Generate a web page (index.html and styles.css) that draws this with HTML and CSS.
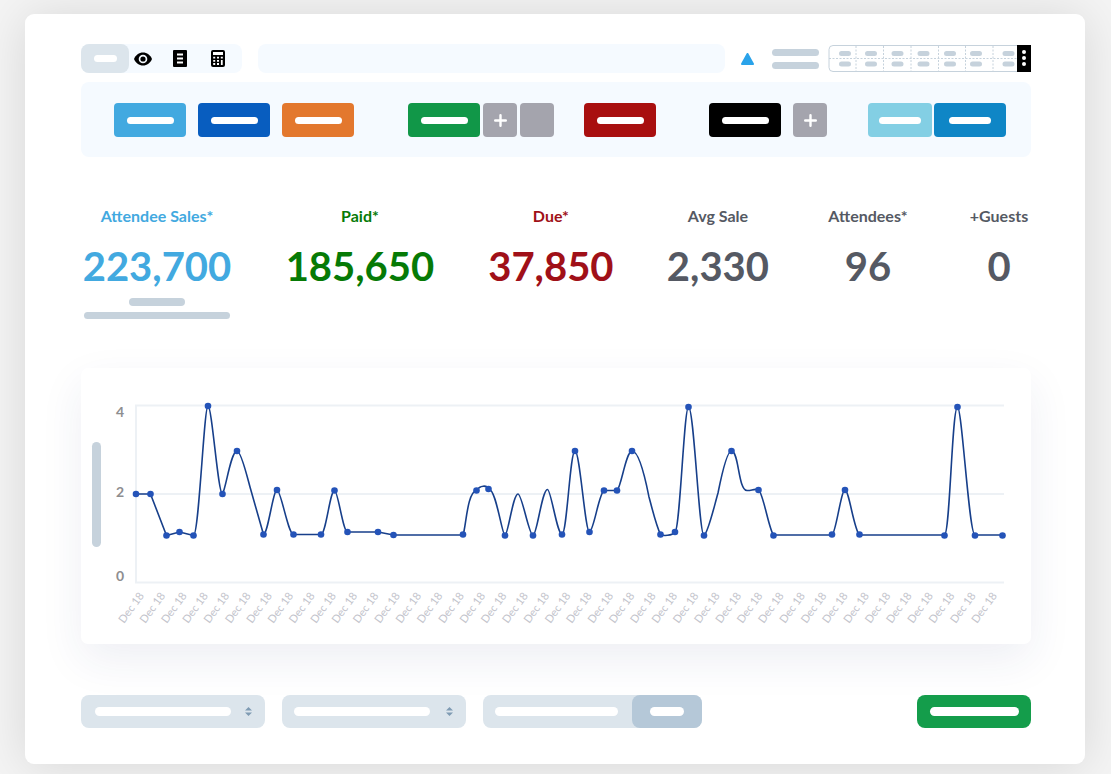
FILE: index.html
```html
<!DOCTYPE html>
<html lang="en">
<head>
<meta charset="utf-8">
<meta name="viewport" content="width=device-width, initial-scale=1">
<title>Attendee Sales</title>
<link rel="stylesheet" href="styles.css">
</head>
<body>
<main class="window">
  <header class="topbar">
    <nav class="tabs" aria-label="Views">
      <button class="tab tab-current" type="button" aria-label="Overview"><span class="pill pill-tab"></span></button>
      <button class="tab tab-eye" type="button" aria-label="Preview">
        <svg width="18" height="14" viewBox="0 0 18 14"><path d="M9 0.5C5 0.5 1.7 3 0 7c1.700 4 5 6.500 9 6.500S16.300 11 18 7C16.300 3 13 0.500 9 0.500z"/><circle cx="9" cy="7" r="4.300" fill="#f5faff"/><circle cx="9" cy="7" r="2.600"/></svg>
      </button>
      <button class="tab tab-list" type="button" aria-label="List">
        <svg width="14" height="17" viewBox="0 0 14 17"><rect width="14" height="17" rx="1"/><path d="M4 4.500h6M4 8.500h6M4 12.500h6" stroke="#fff" stroke-width="1.800"/></svg>
      </button>
      <button class="tab tab-calc" type="button" aria-label="Calculator">
        <svg width="14" height="17" viewBox="0 0 14 17"><rect width="14" height="17" rx="2"/><path d="M2 2h10v3H2z" fill="#fff"/><path d="M2.200 7.700h2M6 7.700h2M9.800 7.700h2M2.200 10.800h2M6 10.800h2M2.200 14h2M6 14h2" stroke="#fff" stroke-width="1.800"/><path d="M10.800 10v5" stroke="#fff" stroke-width="1.800"/></svg>
      </button>
    </nav>
    <input class="search" type="search" aria-label="Search">
    <svg class="triangle" width="13" height="12" viewBox="0 0 13 12"><path d="M6.500 1 12 11H1z" fill="#2aa3ea" stroke="#2aa3ea" stroke-width="2" stroke-linejoin="round"/></svg>
    <div class="lines"><span class="bar bar-line"></span><span class="bar bar-line"></span></div>
    <div class="mini">
      <svg width="189" height="28" viewBox="0 0 189 28">
        <path d="M189 0.500H5a4 4 0 0 0-4 4v18a4 4 0 0 0 4 4h184" fill="none" stroke="#c6d2dc"/>
        <path d="M1 13.500h188M28 1v26M55.500 1v26M83 1v26M110.500 1v26M137.500 1v26M165 1v26" fill="none" stroke="#c6d2dc" stroke-dasharray="2 1.500"/>
        <path d="M13.500 8.500h7M39.500 8.500h7M66 8.500h7M92 8.500h7M118.500 8.500h7M144.500 8.500h7M177 8.500h7M13.500 19h7M39.500 19h7M66 19h7M92 19h7M118.500 19h7M144.500 19h7M177 19h7" fill="none" stroke="#c6d2dc" stroke-width="5" stroke-linecap="round"/>
      </svg>
      <button class="more" type="button" aria-label="More"><svg width="4" height="18" viewBox="0 0 4 18" fill="#fff"><circle cx="2" cy="3" r="2"/><circle cx="2" cy="9" r="2"/><circle cx="2" cy="15" r="2"/></svg></button>
    </div>
  </header>

  <section class="actions" aria-label="Actions">
    <div class="group group-wide">
      <button class="btn sky" type="button" aria-label="Action one"><span class="pill"></span></button>
      <button class="btn blue" type="button" aria-label="Action two"><span class="pill"></span></button>
      <button class="btn orange" type="button" aria-label="Action three"><span class="pill"></span></button>
    </div>
    <div class="group">
      <button class="btn green" type="button" aria-label="Action four"><span class="pill"></span></button>
      <button class="btn square" type="button" aria-label="Add"><svg width="13" height="13" viewBox="0 0 13 13"><path d="M6.500 1.200v10.600M1.200 6.500h10.600" stroke="#fff" stroke-width="2.400" stroke-linecap="round"/></svg></button>
      <button class="btn square" type="button" aria-label="Options"></button>
    </div>
    <div class="group">
      <button class="btn red" type="button" aria-label="Action five"><span class="pill"></span></button>
    </div>
    <div class="group group-wide">
      <button class="btn black" type="button" aria-label="Action six"><span class="pill"></span></button>
      <button class="btn square" type="button" aria-label="Add"><svg width="13" height="13" viewBox="0 0 13 13"><path d="M6.500 1.200v10.600M1.200 6.500h10.600" stroke="#fff" stroke-width="2.400" stroke-linecap="round"/></svg></button>
    </div>
    <div class="group group-tight">
      <button class="btn narrow aqua" type="button" aria-label="Action seven"><span class="pill pill-short"></span></button>
      <button class="btn azure" type="button" aria-label="Action eight"><span class="pill pill-short"></span></button>
    </div>
  </section>

  <section class="stats" aria-label="Totals">
    <div class="stat stat-sales">
      <h2 class="label">Attendee Sales*</h2>
      <p class="value">223,700</p>
      <span class="bar bar-small"></span>
      <span class="bar bar-wide"></span>
    </div>
    <div class="stat stat-paid"><h2 class="label">Paid*</h2><p class="value">185,650</p></div>
    <div class="stat stat-due"><h2 class="label">Due*</h2><p class="value">37,850</p></div>
    <div class="stat"><h2 class="label">Avg Sale</h2><p class="value">2,330</p></div>
    <div class="stat"><h2 class="label">Attendees*</h2><p class="value">96</p></div>
    <div class="stat"><h2 class="label">+Guests</h2><p class="value">0</p></div>
  </section>

  <section class="chart" aria-label="Sales by day">
    <svg class="plot" viewBox="81 368 950 276">
      <rect x="92" y="442" width="9" height="105" rx="4.500" fill="#c6d2dc"/>
      <path d="M1004 405.500H136V582.500H1004M136 494H1004" fill="none" stroke="#edf1f5" stroke-width="2"/>
      <g class="ticks"><text x="120" y="417">4</text><text x="120" y="497">2</text><text x="120" y="581">0</text></g>
      <path class="curve" d="M136 494H150.500L166.500 535.500L179.500 532L193.500 535.500C199 535 204 406 208 406C212 406 218 494 222.500 494C226 488 231 451 237 451C241 451 247 476 250 487L263.500 534.500C268 534 273 490 277 490C281 490 288 534 293.500 534.500H321C326 534 330 490.500 334.500 490.500C338 490.500 343 532 347.500 532H378L393.500 535H463C466 528 467 492 476.500 490.500C480 485 487 485 488.500 489C496 488 502 535.500 505 535.500C508 535 513 494 518 494C522 494 529 535.500 533 535.500C537 535 542 489.500 547.500 489.500C551 489.500 557 534 562 534.500C567 534 570 451 575 451C580 451 585 532 589.500 532C594 530 599 493 604 490.500L617 490.500C621 488 626 451 632 451C640 451 647 487 649 497C652 508 656 525 660.500 534.500C663 536 672 536 675 532C680 530 684 407 688.500 407C694 407 699 535.500 704 535.500C708 533 714 507 718 493C722 473 727 451 731.500 451C739 451 738 490 747 490.500C751 491 755 488 758.500 490C763 492 769 530 773.500 535H832C836 533 841 490 845 490C849 490 854 530 859.500 535H944.500C950 534 952 407 957.500 407C962 407 969 535 975 535H1002.500"/>
      <g id="dots" class="dots"></g>
      <g id="dates" class="dates"></g>
    </svg>
  </section>

  <footer class="controls">
    <label class="field">
      <select class="select" aria-label="First filter"><option></option></select>
      <span class="face"><span class="pill pill-field"></span><svg width="7" height="9" viewBox="0 0 7 9" fill="#7f9bb3"><path d="M3.500 0 7 3.500H0zM0 5.500h7L3.500 9z"/></svg></span>
    </label>
    <label class="field">
      <select class="select" aria-label="Second filter"><option></option></select>
      <span class="face face-near"><span class="pill pill-field"></span><svg width="7" height="9" viewBox="0 0 7 9" fill="#7f9bb3"><path d="M3.500 0 7 3.500H0zM0 5.500h7L3.500 9z"/></svg></span>
    </label>
    <div class="combo">
      <input class="entry" type="text" aria-label="Value">
      <button class="apply" type="button" aria-label="Apply"><span class="pill pill-apply"></span></button>
    </div>
    <button class="submit" type="button" aria-label="Submit"><span class="pill pill-submit"></span></button>
  </footer>
</main>
<script src="chart.js"></script>
</body>
</html>
```

FILE: styles.css
```css
* {
  box-sizing: border-box;
}

body {
  margin: 0;
  padding: 14px 26px 10px 25px;
  background: #f4f4f4;
  font-family: Lato, "Liberation Sans", sans-serif;
  color: #555963;
}

button,
input,
select {
  border: 0;
  padding: 0;
  margin: 0;
  font: inherit;
  appearance: none;
}

button {
  display: flex;
  align-items: center;
  justify-content: center;
  cursor: pointer;
}

.window {
  padding: 30px 54px 36px 56px;
  border-radius: 9px;
  background: #fff;
  box-shadow: 0 2px 50px rgba(0, 0, 0, 0.12);
}

.pill {
  display: block;
  width: 47px;
  height: 7px;
  border-radius: 4px;
  background: #fff;
}

.bar {
  display: block;
  height: 7px;
  border-radius: 4px;
  background: #c6d2dc;
}

.topbar {
  display: flex;
  align-items: center;
  height: 29px;
}

.tabs {
  display: flex;
  width: 161px;
  height: 29px;
  border-radius: 8px;
  background: #f5faff;
}

.tab {
  background: none;
}

.tab-current {
  width: 48px;
  border-radius: 8px;
  background: #dce5ec;
}

.tab-eye {
  width: 28px;
}

.tab-list {
  width: 46px;
}

.tab-calc {
  width: 30px;
}

.pill-tab {
  width: 23px;
}

.search {
  flex: 1;
  min-width: 0;
  height: 29px;
  margin-left: 16px;
  border-radius: 8px;
  background: #f5faff;
}

.triangle {
  margin-left: 16px;
}

.lines {
  display: grid;
  gap: 6px;
  width: 47px;
  margin: 0 9px 0 18px;
}

.mini {
  display: flex;
}

.more {
  width: 14px;
  height: 27px;
  background: #000;
}

.actions {
  display: grid;
  grid-template-columns: 294fr 176fr 125fr 159fr 138fr;
  margin-top: 9px;
  padding: 21px 25px 20px 33px;
  border-radius: 8px;
  background: #f5faff;
}

.group {
  display: flex;
  gap: 3px;
}

.group-wide {
  gap: 12px;
}

.group-tight {
  gap: 2px;
}

.btn {
  width: 72px;
  height: 34px;
  border-radius: 4px;
}

.narrow {
  width: 64px;
}

.square {
  width: 34px;
  background: #a4a4ad;
}

.pill-short {
  width: 42px;
}

.sky { background: #42a9e0; }
.blue { background: #085dbf; }
.orange { background: #e3782e; }
.green { background: #119748; }
.red { background: #a80f0f; }
.black { background: #000; }
.aqua { background: #83cfe4; }
.azure { background: #0f86c6; }

.stats {
  display: grid;
  grid-template-columns: 152fr 150fr 128fr 102fr 94fr 64fr;
  column-gap: 52px;
  min-height: 113px;
  margin-top: 49px;
}

.stat {
  display: flex;
  flex-direction: column;
  align-items: center;
  white-space: nowrap;
}

.stat-sales { color: #42a9e0; }
.stat-paid { color: #067a06; }
.stat-due { color: #a01018; }

.label {
  margin: 0;
  font-size: 16px;
  line-height: 20px;
  font-weight: 700;
}

.value {
  margin: 16px 0 0;
  font-size: 40px;
  line-height: 48px;
  font-weight: 700;
}

.bar-small {
  width: 56px;
  height: 8px;
  margin-top: 8px;
}

.bar-wide {
  width: 146px;
  margin-top: 6px;
}

.chart {
  margin-top: 49px;
  border-radius: 7px;
  background: #fff;
  box-shadow: 0 16px 44px rgba(40, 50, 110, 0.08);
}

.plot {
  display: block;
  width: 100%;
}

.curve {
  fill: none;
  stroke: #173f8a;
  stroke-width: 1.6px;
  stroke-linejoin: round;
}

.dots {
  fill: #2453b8;
}

.ticks {
  fill: #8e8e90;
  font-size: 14px;
  font-weight: 700;
  text-anchor: middle;
}

.dates {
  fill: #c3c4cc;
  font-size: 11px;
}

.controls {
  display: flex;
  align-items: center;
  gap: 17px;
  margin-top: 51px;
}

.field {
  display: grid;
  width: 184px;
}

.select,
.face {
  grid-area: 1 / 1;
}

.select {
  width: 100%;
  height: 33px;
  border-radius: 8px;
  background: #dce5ec;
}

.face {
  display: flex;
  align-items: center;
  justify-content: space-between;
  padding: 0 13px 0 14px;
  pointer-events: none;
}

.face-near {
  padding-left: 12px;
}

.pill-field {
  width: 136px;
  height: 9px;
  border-radius: 5px;
}

.combo {
  display: flex;
  align-items: center;
  width: 219px;
  height: 33px;
  padding-left: 12px;
  border-radius: 8px;
  background: #dce5ec;
}

.entry {
  width: 123px;
  height: 9px;
  border-radius: 5px;
  background: #fff;
}

.apply {
  width: 70px;
  height: 33px;
  margin-left: auto;
  border-radius: 8px;
  background: #b5c8d8;
}

.pill-apply {
  width: 34px;
  height: 9px;
  border-radius: 5px;
}

.submit {
  width: 114px;
  height: 33px;
  margin-left: auto;
  border-radius: 8px;
  background: #149d4b;
}

.pill-submit {
  width: 89px;
  height: 9px;
  border-radius: 5px;
}
```

FILE: chart.js
```js
const NS = "http://www.w3.org/2000/svg";

const points = [
  [136, 494], [150.5, 494], [166.5, 535.5], [179.5, 532], [193.5, 535.5],
  [208, 406], [222.5, 494], [237, 451], [263.5, 534.5], [277, 490],
  [293.5, 534.5], [321, 534.5], [334.5, 490.5], [347.5, 532], [378, 532],
  [393.5, 535], [463, 534.5], [476.5, 490.5], [488.5, 489], [505, 535.5],
  [533, 535.5], [562, 534.5], [575, 451], [589.5, 532], [604, 490.5],
  [617, 490.5], [632, 451], [660.5, 534.5], [675, 532], [688.5, 407],
  [704, 535.5], [731.5, 451], [758.5, 490], [773.5, 535.5], [832, 534.5],
  [845, 490], [859.5, 534.5], [944.5, 535.5], [957.5, 407], [975, 535.5],
  [1002.5, 535.5]
];

const dots = document.getElementById("dots");
const dates = document.getElementById("dates");

points.forEach(([x, y]) => {
  const dot = document.createElementNS(NS, "circle");
  dot.setAttribute("cx", x);
  dot.setAttribute("cy", y);
  dot.setAttribute("r", 3.3);
  dots.append(dot);
});

// One date label under each step of the time axis.
const labelCount = 41;
const firstX = 124;
const lastX = 977;
for (let i = 0; i < labelCount; i += 1) {
  const x = firstX + ((lastX - firstX) * i) / (labelCount - 1);
  const text = document.createElementNS(NS, "text");
  text.setAttribute("transform", `translate(${x} 624) rotate(-54)`);
  text.textContent = "Dec 18";
  dates.append(text);
}
```
